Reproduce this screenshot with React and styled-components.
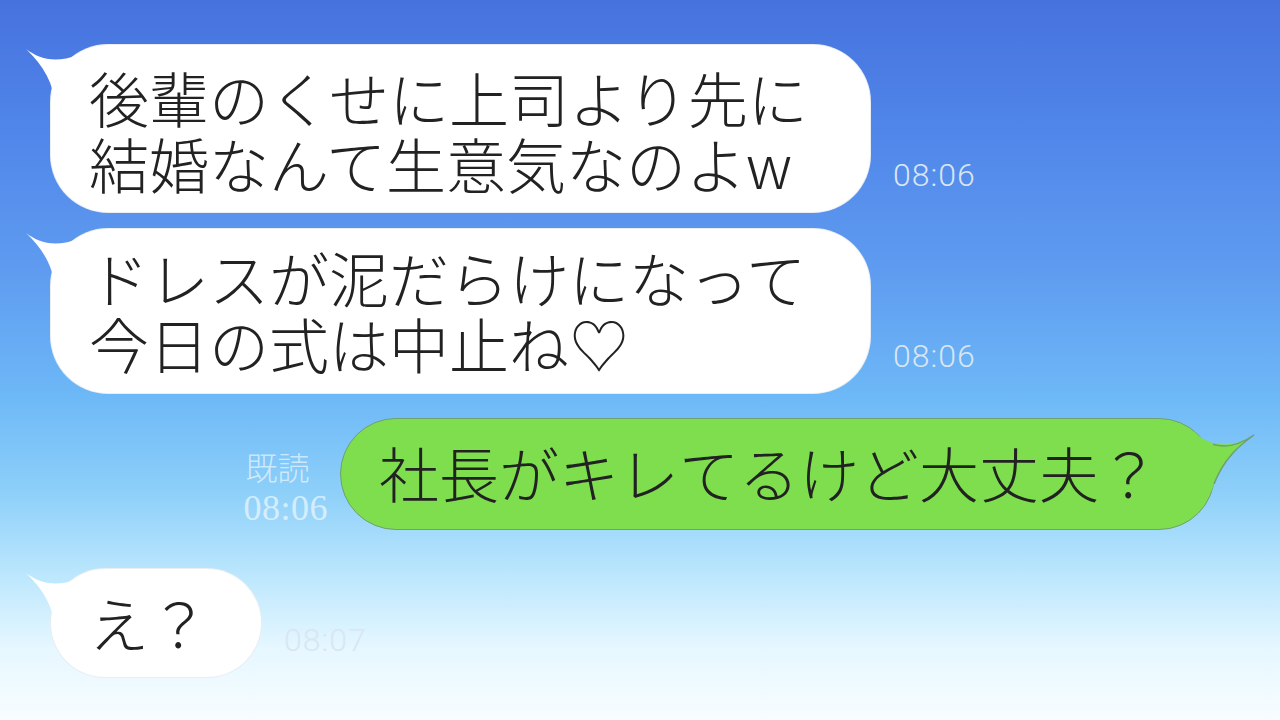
import React from "react";
import styled, { createGlobalStyle } from "styled-components";

const Global = createGlobalStyle`
  html, body { margin: 0; padding: 0; }
  body { font-family: "Noto Sans CJK JP", "Noto Sans", sans-serif; }
`;

const Screen = styled.div`
  width: 1280px;
  height: 720px;
  overflow: hidden;
  box-sizing: border-box;
  padding: 44px 65px 0 50px;
  display: flex;
  flex-direction: column;
  background: linear-gradient(
    180deg,
    #4672de 0%,
    #5188ea 20%,
    #5f9cf0 38%,
    #6db8f7 55%,
    #8ccff9 68%,
    #bce7fd 80%,
    #e6f7ff 90%,
    #f8fdff 100%
  );
`;

const Row = styled.div`
  display: flex;
  align-items: flex-end;
  justify-content: ${(p) => (p.$out ? "flex-end" : "flex-start")};
  gap: ${(p) => (p.$out ? "12px" : "22px")};
  margin-top: ${(p) => p.$top || 0}px;
`;

const Bubble = styled.div`
  position: relative;
  box-sizing: border-box;
  width: ${(p) => p.$w}px;
  height: ${(p) => p.$h}px;
  padding: ${(p) => p.$pad};
  border-radius: ${(p) => p.$r}px;
  background: ${(p) => (p.$out ? "#7fde4d" : "#ffffff")};
  border: ${(p) =>
    p.$out ? "1.5px solid #6f9f72" : "1px solid rgba(214, 224, 232, 0.55)"};
  font-family: "Noto Sans CJK JP", "Noto Sans", sans-serif;
  font-size: 60px;
  font-weight: 300;
  line-height: 66px;
  color: #222222;
  white-space: nowrap;
`;

const Text = styled.p`
  position: relative;
  z-index: 2;
  margin: 0;
`;

const TailSvg = styled.svg`
  position: absolute;
  top: -1px;
  ${(p) => (p.$out ? "right: -60px;" : "left: -27px;")}
  width: ${(p) => (p.$out ? 80 : 56)}px;
  height: ${(p) => (p.$out ? 74 : 62)}px;
  overflow: visible;
  z-index: 1;
`;

const Stamp = styled.div`
  font-family: "Roboto", "Liberation Sans", sans-serif;
  font-weight: 300;
  font-size: 32px;
  line-height: 32px;
  letter-spacing: 1px;
  color: #d9e6f1;
  margin-bottom: 22px;
`;

const Receipt = styled.div`
  display: flex;
  flex-direction: column;
  align-items: flex-start;
  gap: 4px;
  margin-bottom: 2px;
  color: rgba(255, 255, 255, 0.62);
`;

const ReadLabel = styled.div`
  font-family: "Noto Sans CJK JP", sans-serif;
  font-weight: 300;
  font-size: 32px;
  line-height: 36px;
  padding-left: 2px;
`;

const ReadTime = styled.div`
  font-family: "Liberation Serif", serif;
  font-size: 36px;
  line-height: 40px;
  letter-spacing: 0.5px;
`;

function InTail() {
  return (
    <TailSvg viewBox="0 0 56 62">
      <path
        d="M2 5 C 14 14, 30 20, 54 11 L 54 62 L 31 62 C 30 40, 20 22, 2 5 Z"
        fill="#ffffff"
      />
    </TailSvg>
  );
}

function OutTail() {
  return (
    <TailSvg $out viewBox="0 0 80 74">
      <path
        d="M0 13 C 14 30, 40 30, 60 17 C 46 27, 30 40, 17 74 L 0 74 Z"
        fill="#7fde4d"
      />
      <path
        d="M19 26.3 C 30 30, 44 28, 60 17 C 46 27, 30 40, 20 66"
        fill="none"
        stroke="#6f9f72"
        strokeWidth="1.5"
      />
    </TailSvg>
  );
}

function Incoming({ lines, w, h, pad, r, time, top }) {
  return (
    <Row $top={top}>
      <Bubble $w={w} $h={h} $pad={pad} $r={r}>
        <InTail />
        <Text>
          {lines.map((l, i) => (
            <React.Fragment key={l}>
              {i > 0 && <br />}
              {l}
            </React.Fragment>
          ))}
        </Text>
      </Bubble>
      <Stamp>{time}</Stamp>
    </Row>
  );
}

export default function App() {
  return (
    <>
      <Global />
      <Screen>
        <Incoming
          lines={["後輩のくせに上司より先に", "結婚なんて生意気なのよw"]}
          w={821}
          h={169}
          pad="19px 38px 17px 38px"
          r={58}
          time="08:06"
        />
        <Incoming
          lines={["ドレスが泥だらけになって", "今日の式は中止ね♡"]}
          w={821}
          h={166}
          pad="15px 38px 17px 38px"
          r={58}
          time="08:06"
          top={15}
        />
        <Row $out $top={24}>
          <Receipt>
            <ReadLabel>既読</ReadLabel>
            <ReadTime>08:06</ReadTime>
          </Receipt>
          <Bubble $out $w={875} $h={112} $pad="20px 38px 20px 38px" $r={56}>
            <OutTail />
            <Text>社長がキレてるけど大丈夫？</Text>
          </Bubble>
        </Row>
        <Incoming
          lines={["え？"]}
          w={212}
          h={110}
          pad="20px 38px 20px 38px"
          r={55}
          time="08:07"
          top={38}
        />
      </Screen>
    </>
  );
}
